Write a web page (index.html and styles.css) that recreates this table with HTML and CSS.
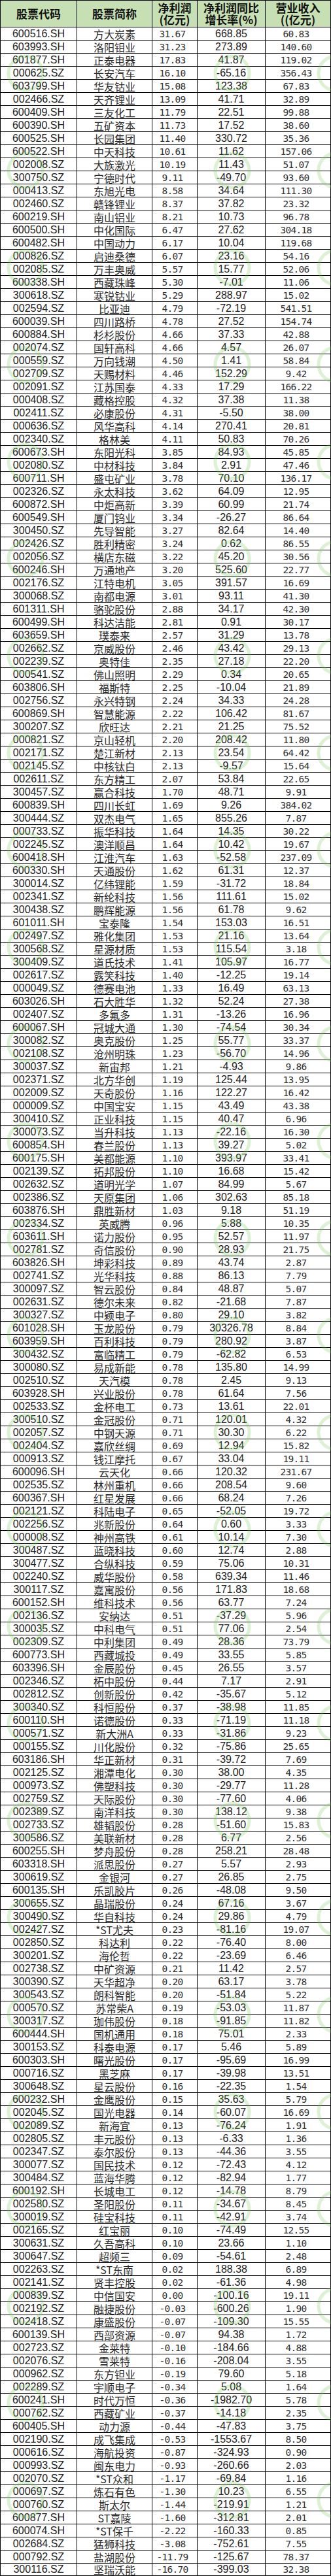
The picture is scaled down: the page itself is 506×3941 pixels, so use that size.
FILE: index.html
```html
<!DOCTYPE html>
<html lang="zh-CN">
<head>
<meta charset="utf-8">
<title>股票净利润表</title>
<link rel="stylesheet" href="styles.css">
</head>
<body>
<div class="sheet">
<div class="watermark" aria-hidden="true"></div>
<div class="row head"><span class="c">股票代码</span><span class="c">股票简称</span><span class="c two">净利润<br>(亿元)</span><span class="c two">净利润同比<br>增长率(%)</span><span class="c two">营业收入<br>((亿元)</span></div>
<div class="row"><span class="c code">600516.SH</span><span class="c name">方大炭素</span><span class="c np">31.67</span><span class="c gr">668.85</span><span class="c rev">60.83</span></div>
<div class="row"><span class="c code">603993.SH</span><span class="c name">洛阳钼业</span><span class="c np">31.23</span><span class="c gr">273.89</span><span class="c rev">140.60</span></div>
<div class="row"><span class="c code">601877.SH</span><span class="c name">正泰电器</span><span class="c np">17.83</span><span class="c gr">41.87</span><span class="c rev">119.02</span></div>
<div class="row"><span class="c code">000625.SZ</span><span class="c name">长安汽车</span><span class="c np">16.10</span><span class="c gr">-65.16</span><span class="c rev">356.43</span></div>
<div class="row"><span class="c code">603799.SH</span><span class="c name">华友钴业</span><span class="c np">15.08</span><span class="c gr">123.38</span><span class="c rev">67.83</span></div>
<div class="row"><span class="c code">002466.SZ</span><span class="c name">天齐锂业</span><span class="c np">13.09</span><span class="c gr">41.71</span><span class="c rev">32.89</span></div>
<div class="row"><span class="c code">600409.SH</span><span class="c name">三友化工</span><span class="c np">11.79</span><span class="c gr">22.51</span><span class="c rev">99.88</span></div>
<div class="row"><span class="c code">600390.SH</span><span class="c name">五矿资本</span><span class="c np">11.73</span><span class="c gr">17.52</span><span class="c rev">38.60</span></div>
<div class="row"><span class="c code">600525.SH</span><span class="c name">长园集团</span><span class="c np">11.40</span><span class="c gr">330.72</span><span class="c rev">35.36</span></div>
<div class="row"><span class="c code">600522.SH</span><span class="c name">中天科技</span><span class="c np">10.61</span><span class="c gr">11.62</span><span class="c rev">157.06</span></div>
<div class="row"><span class="c code">002008.SZ</span><span class="c name">大族激光</span><span class="c np">10.19</span><span class="c gr">11.43</span><span class="c rev">51.07</span></div>
<div class="row"><span class="c code">300750.SZ</span><span class="c name">宁德时代</span><span class="c np">9.11</span><span class="c gr">-49.70</span><span class="c rev">93.60</span></div>
<div class="row"><span class="c code">000413.SZ</span><span class="c name">东旭光电</span><span class="c np">8.58</span><span class="c gr">34.64</span><span class="c rev">111.30</span></div>
<div class="row"><span class="c code">002460.SZ</span><span class="c name">赣锋锂业</span><span class="c np">8.37</span><span class="c gr">37.82</span><span class="c rev">23.32</span></div>
<div class="row"><span class="c code">600219.SH</span><span class="c name">南山铝业</span><span class="c np">8.21</span><span class="c gr">10.73</span><span class="c rev">96.78</span></div>
<div class="row"><span class="c code">600500.SH</span><span class="c name">中化国际</span><span class="c np">6.47</span><span class="c gr">27.62</span><span class="c rev">304.18</span></div>
<div class="row"><span class="c code">600482.SH</span><span class="c name">中国动力</span><span class="c np">6.17</span><span class="c gr">10.04</span><span class="c rev">119.68</span></div>
<div class="row"><span class="c code">000826.SZ</span><span class="c name">启迪桑德</span><span class="c np">6.07</span><span class="c gr">23.16</span><span class="c rev">54.16</span></div>
<div class="row"><span class="c code">002085.SZ</span><span class="c name">万丰奥威</span><span class="c np">5.57</span><span class="c gr">15.77</span><span class="c rev">52.06</span></div>
<div class="row"><span class="c code">600338.SH</span><span class="c name">西藏珠峰</span><span class="c np">5.30</span><span class="c gr">-7.01</span><span class="c rev">11.06</span></div>
<div class="row"><span class="c code">300618.SZ</span><span class="c name">寒锐钴业</span><span class="c np">5.29</span><span class="c gr">288.97</span><span class="c rev">15.02</span></div>
<div class="row"><span class="c code">002594.SZ</span><span class="c name">比亚迪</span><span class="c np">4.79</span><span class="c gr">-72.19</span><span class="c rev">541.51</span></div>
<div class="row"><span class="c code">600039.SH</span><span class="c name">四川路桥</span><span class="c np">4.78</span><span class="c gr">27.52</span><span class="c rev">154.74</span></div>
<div class="row"><span class="c code">600884.SH</span><span class="c name">杉杉股份</span><span class="c np">4.66</span><span class="c gr">37.33</span><span class="c rev">42.88</span></div>
<div class="row"><span class="c code">002074.SZ</span><span class="c name">国轩高科</span><span class="c np">4.66</span><span class="c gr">4.57</span><span class="c rev">26.07</span></div>
<div class="row"><span class="c code">000559.SZ</span><span class="c name">万向钱潮</span><span class="c np">4.50</span><span class="c gr">1.41</span><span class="c rev">58.84</span></div>
<div class="row"><span class="c code">002709.SZ</span><span class="c name">天赐材料</span><span class="c np">4.46</span><span class="c gr">152.29</span><span class="c rev">9.42</span></div>
<div class="row"><span class="c code">002091.SZ</span><span class="c name">江苏国泰</span><span class="c np">4.33</span><span class="c gr">17.29</span><span class="c rev">166.22</span></div>
<div class="row"><span class="c code">000408.SZ</span><span class="c name">藏格控股</span><span class="c np">4.32</span><span class="c gr">37.38</span><span class="c rev">11.38</span></div>
<div class="row"><span class="c code">002411.SZ</span><span class="c name">必康股份</span><span class="c np">4.31</span><span class="c gr">-5.50</span><span class="c rev">38.00</span></div>
<div class="row"><span class="c code">000636.SZ</span><span class="c name">风华高科</span><span class="c np">4.14</span><span class="c gr">270.41</span><span class="c rev">20.81</span></div>
<div class="row"><span class="c code">002340.SZ</span><span class="c name">格林美</span><span class="c np">4.11</span><span class="c gr">50.83</span><span class="c rev">70.26</span></div>
<div class="row"><span class="c code">600673.SH</span><span class="c name">东阳光科</span><span class="c np">3.85</span><span class="c gr">84.93</span><span class="c rev">45.85</span></div>
<div class="row"><span class="c code">002080.SZ</span><span class="c name">中材科技</span><span class="c np">3.84</span><span class="c gr">2.91</span><span class="c rev">47.46</span></div>
<div class="row"><span class="c code">600711.SH</span><span class="c name">盛屯矿业</span><span class="c np">3.78</span><span class="c gr">70.10</span><span class="c rev">136.17</span></div>
<div class="row"><span class="c code">002326.SZ</span><span class="c name">永太科技</span><span class="c np">3.62</span><span class="c gr">64.09</span><span class="c rev">12.95</span></div>
<div class="row"><span class="c code">600872.SH</span><span class="c name">中炬高新</span><span class="c np">3.39</span><span class="c gr">60.99</span><span class="c rev">21.74</span></div>
<div class="row"><span class="c code">600549.SH</span><span class="c name">厦门钨业</span><span class="c np">3.34</span><span class="c gr">-26.27</span><span class="c rev">86.64</span></div>
<div class="row"><span class="c code">300450.SZ</span><span class="c name">先导智能</span><span class="c np">3.27</span><span class="c gr">82.64</span><span class="c rev">14.40</span></div>
<div class="row"><span class="c code">002426.SZ</span><span class="c name">胜利精密</span><span class="c np">3.24</span><span class="c gr">0.62</span><span class="c rev">86.55</span></div>
<div class="row"><span class="c code">002056.SZ</span><span class="c name">横店东磁</span><span class="c np">3.22</span><span class="c gr">45.20</span><span class="c rev">30.56</span></div>
<div class="row"><span class="c code">600246.SH</span><span class="c name">万通地产</span><span class="c np">3.20</span><span class="c gr">525.60</span><span class="c rev">22.77</span></div>
<div class="row"><span class="c code">002176.SZ</span><span class="c name">江特电机</span><span class="c np">3.05</span><span class="c gr">391.57</span><span class="c rev">16.69</span></div>
<div class="row"><span class="c code">300068.SZ</span><span class="c name">南都电源</span><span class="c np">3.01</span><span class="c gr">93.11</span><span class="c rev">41.30</span></div>
<div class="row"><span class="c code">601311.SH</span><span class="c name">骆驼股份</span><span class="c np">2.88</span><span class="c gr">34.17</span><span class="c rev">42.30</span></div>
<div class="row"><span class="c code">600499.SH</span><span class="c name">科达洁能</span><span class="c np">2.81</span><span class="c gr">0.91</span><span class="c rev">30.17</span></div>
<div class="row"><span class="c code">603659.SH</span><span class="c name">璞泰来</span><span class="c np">2.57</span><span class="c gr">31.29</span><span class="c rev">13.78</span></div>
<div class="row"><span class="c code">002662.SZ</span><span class="c name">京威股份</span><span class="c np">2.46</span><span class="c gr">43.42</span><span class="c rev">29.13</span></div>
<div class="row"><span class="c code">002239.SZ</span><span class="c name">奥特佳</span><span class="c np">2.35</span><span class="c gr">27.18</span><span class="c rev">22.20</span></div>
<div class="row"><span class="c code">000541.SZ</span><span class="c name">佛山照明</span><span class="c np">2.29</span><span class="c gr">0.34</span><span class="c rev">20.65</span></div>
<div class="row"><span class="c code">603806.SH</span><span class="c name">福斯特</span><span class="c np">2.25</span><span class="c gr">-10.04</span><span class="c rev">21.89</span></div>
<div class="row"><span class="c code">002756.SZ</span><span class="c name">永兴特钢</span><span class="c np">2.24</span><span class="c gr">34.33</span><span class="c rev">24.28</span></div>
<div class="row"><span class="c code">600869.SH</span><span class="c name">智慧能源</span><span class="c np">2.22</span><span class="c gr">106.42</span><span class="c rev">81.67</span></div>
<div class="row"><span class="c code">300207.SZ</span><span class="c name">欣旺达</span><span class="c np">2.21</span><span class="c gr">21.25</span><span class="c rev">75.52</span></div>
<div class="row"><span class="c code">000821.SZ</span><span class="c name">京山轻机</span><span class="c np">2.20</span><span class="c gr">208.42</span><span class="c rev">11.80</span></div>
<div class="row"><span class="c code">002171.SZ</span><span class="c name">楚江新材</span><span class="c np">2.13</span><span class="c gr">23.54</span><span class="c rev">64.42</span></div>
<div class="row"><span class="c code">002145.SZ</span><span class="c name">中核钛白</span><span class="c np">2.13</span><span class="c gr">-9.57</span><span class="c rev">15.64</span></div>
<div class="row"><span class="c code">002611.SZ</span><span class="c name">东方精工</span><span class="c np">2.07</span><span class="c gr">53.84</span><span class="c rev">22.65</span></div>
<div class="row"><span class="c code">300457.SZ</span><span class="c name">赢合科技</span><span class="c np">1.70</span><span class="c gr">48.71</span><span class="c rev">9.91</span></div>
<div class="row"><span class="c code">600839.SH</span><span class="c name">四川长虹</span><span class="c np">1.69</span><span class="c gr">9.26</span><span class="c rev">384.02</span></div>
<div class="row"><span class="c code">300444.SZ</span><span class="c name">双杰电气</span><span class="c np">1.65</span><span class="c gr">855.26</span><span class="c rev">7.87</span></div>
<div class="row"><span class="c code">000733.SZ</span><span class="c name">振华科技</span><span class="c np">1.64</span><span class="c gr">14.35</span><span class="c rev">30.22</span></div>
<div class="row"><span class="c code">002245.SZ</span><span class="c name">澳洋顺昌</span><span class="c np">1.64</span><span class="c gr">10.42</span><span class="c rev">19.67</span></div>
<div class="row"><span class="c code">600418.SH</span><span class="c name">江淮汽车</span><span class="c np">1.63</span><span class="c gr">-52.58</span><span class="c rev">237.09</span></div>
<div class="row"><span class="c code">600330.SH</span><span class="c name">天通股份</span><span class="c np">1.62</span><span class="c gr">61.31</span><span class="c rev">12.37</span></div>
<div class="row"><span class="c code">300014.SZ</span><span class="c name">亿纬锂能</span><span class="c np">1.59</span><span class="c gr">-31.72</span><span class="c rev">18.84</span></div>
<div class="row"><span class="c code">002341.SZ</span><span class="c name">新纶科技</span><span class="c np">1.56</span><span class="c gr">111.61</span><span class="c rev">15.02</span></div>
<div class="row"><span class="c code">300438.SZ</span><span class="c name">鹏辉能源</span><span class="c np">1.56</span><span class="c gr">61.78</span><span class="c rev">9.62</span></div>
<div class="row"><span class="c code">601011.SH</span><span class="c name">宝泰隆</span><span class="c np">1.54</span><span class="c gr">153.03</span><span class="c rev">16.51</span></div>
<div class="row"><span class="c code">002497.SZ</span><span class="c name">雅化集团</span><span class="c np">1.53</span><span class="c gr">21.16</span><span class="c rev">13.64</span></div>
<div class="row"><span class="c code">300568.SZ</span><span class="c name">星源材质</span><span class="c np">1.53</span><span class="c gr">115.54</span><span class="c rev">3.18</span></div>
<div class="row"><span class="c code">300409.SZ</span><span class="c name">道氏技术</span><span class="c np">1.41</span><span class="c gr">105.97</span><span class="c rev">16.77</span></div>
<div class="row"><span class="c code">002617.SZ</span><span class="c name">露笑科技</span><span class="c np">1.40</span><span class="c gr">-12.25</span><span class="c rev">19.14</span></div>
<div class="row"><span class="c code">000049.SZ</span><span class="c name">德赛电池</span><span class="c np">1.33</span><span class="c gr">16.49</span><span class="c rev">63.13</span></div>
<div class="row"><span class="c code">603026.SH</span><span class="c name">石大胜华</span><span class="c np">1.32</span><span class="c gr">52.24</span><span class="c rev">27.38</span></div>
<div class="row"><span class="c code">002407.SZ</span><span class="c name">多氟多</span><span class="c np">1.31</span><span class="c gr">-13.26</span><span class="c rev">16.96</span></div>
<div class="row"><span class="c code">600067.SH</span><span class="c name">冠城大通</span><span class="c np">1.30</span><span class="c gr">-74.54</span><span class="c rev">30.34</span></div>
<div class="row"><span class="c code">300082.SZ</span><span class="c name">奥克股份</span><span class="c np">1.25</span><span class="c gr">55.77</span><span class="c rev">33.37</span></div>
<div class="row"><span class="c code">002108.SZ</span><span class="c name">沧州明珠</span><span class="c np">1.23</span><span class="c gr">-56.70</span><span class="c rev">14.96</span></div>
<div class="row"><span class="c code">300037.SZ</span><span class="c name">新宙邦</span><span class="c np">1.21</span><span class="c gr">-4.93</span><span class="c rev">9.86</span></div>
<div class="row"><span class="c code">002371.SZ</span><span class="c name">北方华创</span><span class="c np">1.19</span><span class="c gr">125.44</span><span class="c rev">13.95</span></div>
<div class="row"><span class="c code">002009.SZ</span><span class="c name">天奇股份</span><span class="c np">1.16</span><span class="c gr">122.27</span><span class="c rev">16.42</span></div>
<div class="row"><span class="c code">000009.SZ</span><span class="c name">中国宝安</span><span class="c np">1.15</span><span class="c gr">43.49</span><span class="c rev">43.38</span></div>
<div class="row"><span class="c code">300410.SZ</span><span class="c name">正业科技</span><span class="c np">1.15</span><span class="c gr">40.47</span><span class="c rev">6.96</span></div>
<div class="row"><span class="c code">300073.SZ</span><span class="c name">当升科技</span><span class="c np">1.13</span><span class="c gr">-22.16</span><span class="c rev">16.30</span></div>
<div class="row"><span class="c code">600854.SH</span><span class="c name">春兰股份</span><span class="c np">1.13</span><span class="c gr">39.27</span><span class="c rev">5.02</span></div>
<div class="row"><span class="c code">600175.SH</span><span class="c name">美都能源</span><span class="c np">1.10</span><span class="c gr">393.97</span><span class="c rev">33.41</span></div>
<div class="row"><span class="c code">002139.SZ</span><span class="c name">拓邦股份</span><span class="c np">1.10</span><span class="c gr">16.68</span><span class="c rev">15.42</span></div>
<div class="row"><span class="c code">002632.SZ</span><span class="c name">道明光学</span><span class="c np">1.07</span><span class="c gr">84.99</span><span class="c rev">5.67</span></div>
<div class="row"><span class="c code">002386.SZ</span><span class="c name">天原集团</span><span class="c np">1.06</span><span class="c gr">302.63</span><span class="c rev">85.18</span></div>
<div class="row"><span class="c code">603876.SH</span><span class="c name">鼎胜新材</span><span class="c np">1.03</span><span class="c gr">9.18</span><span class="c rev">51.19</span></div>
<div class="row"><span class="c code">002334.SZ</span><span class="c name">英威腾</span><span class="c np">0.96</span><span class="c gr">5.88</span><span class="c rev">10.35</span></div>
<div class="row"><span class="c code">603611.SH</span><span class="c name">诺力股份</span><span class="c np">0.95</span><span class="c gr">52.57</span><span class="c rev">11.97</span></div>
<div class="row"><span class="c code">002781.SZ</span><span class="c name">奇信股份</span><span class="c np">0.90</span><span class="c gr">28.93</span><span class="c rev">21.75</span></div>
<div class="row"><span class="c code">603826.SH</span><span class="c name">坤彩科技</span><span class="c np">0.89</span><span class="c gr">43.74</span><span class="c rev">2.87</span></div>
<div class="row"><span class="c code">002741.SZ</span><span class="c name">光华科技</span><span class="c np">0.88</span><span class="c gr">86.13</span><span class="c rev">7.79</span></div>
<div class="row"><span class="c code">300097.SZ</span><span class="c name">智云股份</span><span class="c np">0.84</span><span class="c gr">48.87</span><span class="c rev">5.07</span></div>
<div class="row"><span class="c code">002631.SZ</span><span class="c name">德尔未来</span><span class="c np">0.82</span><span class="c gr">-21.68</span><span class="c rev">7.87</span></div>
<div class="row"><span class="c code">300327.SZ</span><span class="c name">中颖电子</span><span class="c np">0.80</span><span class="c gr">29.10</span><span class="c rev">3.82</span></div>
<div class="row"><span class="c code">601028.SH</span><span class="c name">玉龙股份</span><span class="c np">0.79</span><span class="c gr">30326.78</span><span class="c rev">8.84</span></div>
<div class="row"><span class="c code">603959.SH</span><span class="c name">百利科技</span><span class="c np">0.79</span><span class="c gr">280.92</span><span class="c rev">3.87</span></div>
<div class="row"><span class="c code">300432.SZ</span><span class="c name">富临精工</span><span class="c np">0.79</span><span class="c gr">-62.82</span><span class="c rev">6.53</span></div>
<div class="row"><span class="c code">300080.SZ</span><span class="c name">易成新能</span><span class="c np">0.78</span><span class="c gr">135.80</span><span class="c rev">14.99</span></div>
<div class="row"><span class="c code">002510.SZ</span><span class="c name">天汽模</span><span class="c np">0.78</span><span class="c gr">2.45</span><span class="c rev">9.13</span></div>
<div class="row"><span class="c code">603928.SH</span><span class="c name">兴业股份</span><span class="c np">0.78</span><span class="c gr">61.64</span><span class="c rev">7.56</span></div>
<div class="row"><span class="c code">002533.SZ</span><span class="c name">金杯电工</span><span class="c np">0.73</span><span class="c gr">13.61</span><span class="c rev">22.01</span></div>
<div class="row"><span class="c code">300510.SZ</span><span class="c name">金冠股份</span><span class="c np">0.71</span><span class="c gr">120.01</span><span class="c rev">4.32</span></div>
<div class="row"><span class="c code">002057.SZ</span><span class="c name">中钢天源</span><span class="c np">0.71</span><span class="c gr">30.30</span><span class="c rev">6.22</span></div>
<div class="row"><span class="c code">002404.SZ</span><span class="c name">嘉欣丝绸</span><span class="c np">0.69</span><span class="c gr">12.94</span><span class="c rev">15.82</span></div>
<div class="row"><span class="c code">000913.SZ</span><span class="c name">钱江摩托</span><span class="c np">0.67</span><span class="c gr">33.04</span><span class="c rev">19.11</span></div>
<div class="row"><span class="c code">600096.SH</span><span class="c name">云天化</span><span class="c np">0.66</span><span class="c gr">120.32</span><span class="c rev">231.67</span></div>
<div class="row"><span class="c code">002535.SZ</span><span class="c name">林州重机</span><span class="c np">0.66</span><span class="c gr">208.54</span><span class="c rev">9.60</span></div>
<div class="row"><span class="c code">600367.SH</span><span class="c name">红星发展</span><span class="c np">0.66</span><span class="c gr">68.24</span><span class="c rev">7.26</span></div>
<div class="row"><span class="c code">002121.SZ</span><span class="c name">科陆电子</span><span class="c np">0.65</span><span class="c gr">-52.05</span><span class="c rev">19.72</span></div>
<div class="row"><span class="c code">002256.SZ</span><span class="c name">兆新股份</span><span class="c np">0.64</span><span class="c gr">0.60</span><span class="c rev">3.33</span></div>
<div class="row"><span class="c code">000008.SZ</span><span class="c name">神州高铁</span><span class="c np">0.61</span><span class="c gr">10.14</span><span class="c rev">7.30</span></div>
<div class="row"><span class="c code">300487.SZ</span><span class="c name">蓝晓科技</span><span class="c np">0.60</span><span class="c gr">12.74</span><span class="c rev">2.88</span></div>
<div class="row"><span class="c code">300477.SZ</span><span class="c name">合纵科技</span><span class="c np">0.59</span><span class="c gr">75.06</span><span class="c rev">10.31</span></div>
<div class="row"><span class="c code">002240.SZ</span><span class="c name">威华股份</span><span class="c np">0.58</span><span class="c gr">639.34</span><span class="c rev">11.46</span></div>
<div class="row"><span class="c code">300117.SZ</span><span class="c name">嘉寓股份</span><span class="c np">0.56</span><span class="c gr">171.83</span><span class="c rev">18.68</span></div>
<div class="row"><span class="c code">600152.SH</span><span class="c name">维科技术</span><span class="c np">0.56</span><span class="c gr">63.77</span><span class="c rev">7.24</span></div>
<div class="row"><span class="c code">002136.SZ</span><span class="c name">安纳达</span><span class="c np">0.51</span><span class="c gr">-37.29</span><span class="c rev">5.96</span></div>
<div class="row"><span class="c code">300035.SZ</span><span class="c name">中科电气</span><span class="c np">0.51</span><span class="c gr">77.06</span><span class="c rev">2.54</span></div>
<div class="row"><span class="c code">002309.SZ</span><span class="c name">中利集团</span><span class="c np">0.49</span><span class="c gr">28.36</span><span class="c rev">73.79</span></div>
<div class="row"><span class="c code">600773.SH</span><span class="c name">西藏城投</span><span class="c np">0.49</span><span class="c gr">33.55</span><span class="c rev">5.85</span></div>
<div class="row"><span class="c code">603396.SH</span><span class="c name">金辰股份</span><span class="c np">0.45</span><span class="c gr">26.55</span><span class="c rev">3.57</span></div>
<div class="row"><span class="c code">002346.SZ</span><span class="c name">柘中股份</span><span class="c np">0.44</span><span class="c gr">7.17</span><span class="c rev">2.91</span></div>
<div class="row"><span class="c code">002812.SZ</span><span class="c name">创新股份</span><span class="c np">0.42</span><span class="c gr">-35.67</span><span class="c rev">5.12</span></div>
<div class="row"><span class="c code">300340.SZ</span><span class="c name">科恒股份</span><span class="c np">0.37</span><span class="c gr">-38.98</span><span class="c rev">11.85</span></div>
<div class="row"><span class="c code">600110.SH</span><span class="c name">诺德股份</span><span class="c np">0.33</span><span class="c gr">-71.19</span><span class="c rev">11.18</span></div>
<div class="row"><span class="c code">000571.SZ</span><span class="c name">新大洲A</span><span class="c np">0.33</span><span class="c gr">-31.86</span><span class="c rev">9.23</span></div>
<div class="row"><span class="c code">000155.SZ</span><span class="c name">川化股份</span><span class="c np">0.32</span><span class="c gr">-75.86</span><span class="c rev">25.65</span></div>
<div class="row"><span class="c code">603186.SH</span><span class="c name">华正新材</span><span class="c np">0.31</span><span class="c gr">-39.72</span><span class="c rev">7.69</span></div>
<div class="row"><span class="c code">002125.SZ</span><span class="c name">湘潭电化</span><span class="c np">0.30</span><span class="c gr">38.00</span><span class="c rev">4.35</span></div>
<div class="row"><span class="c code">000973.SZ</span><span class="c name">佛塑科技</span><span class="c np">0.30</span><span class="c gr">-29.77</span><span class="c rev">11.28</span></div>
<div class="row"><span class="c code">002759.SZ</span><span class="c name">天际股份</span><span class="c np">0.30</span><span class="c gr">-77.60</span><span class="c rev">4.06</span></div>
<div class="row"><span class="c code">002389.SZ</span><span class="c name">南洋科技</span><span class="c np">0.30</span><span class="c gr">138.12</span><span class="c rev">9.38</span></div>
<div class="row"><span class="c code">002733.SZ</span><span class="c name">雄韬股份</span><span class="c np">0.28</span><span class="c gr">-51.60</span><span class="c rev">15.83</span></div>
<div class="row"><span class="c code">300586.SZ</span><span class="c name">美联新材</span><span class="c np">0.28</span><span class="c gr">6.77</span><span class="c rev">2.56</span></div>
<div class="row"><span class="c code">600255.SH</span><span class="c name">梦舟股份</span><span class="c np">0.28</span><span class="c gr">258.21</span><span class="c rev">28.48</span></div>
<div class="row"><span class="c code">603318.SH</span><span class="c name">派思股份</span><span class="c np">0.27</span><span class="c gr">5.57</span><span class="c rev">2.93</span></div>
<div class="row"><span class="c code">300619.SZ</span><span class="c name">金银河</span><span class="c np">0.27</span><span class="c gr">26.85</span><span class="c rev">2.75</span></div>
<div class="row"><span class="c code">600135.SH</span><span class="c name">乐凯胶片</span><span class="c np">0.26</span><span class="c gr">-48.08</span><span class="c rev">9.50</span></div>
<div class="row"><span class="c code">300655.SZ</span><span class="c name">晶瑞股份</span><span class="c np">0.24</span><span class="c gr">67.16</span><span class="c rev">3.67</span></div>
<div class="row"><span class="c code">300490.SZ</span><span class="c name">华自科技</span><span class="c np">0.24</span><span class="c gr">29.86</span><span class="c rev">4.79</span></div>
<div class="row"><span class="c code">002427.SZ</span><span class="c name">*ST尤夫</span><span class="c np">0.23</span><span class="c gr">-81.16</span><span class="c rev">19.07</span></div>
<div class="row"><span class="c code">002850.SZ</span><span class="c name">科达利</span><span class="c np">0.22</span><span class="c gr">-76.40</span><span class="c rev">8.00</span></div>
<div class="row"><span class="c code">300201.SZ</span><span class="c name">海伦哲</span><span class="c np">0.22</span><span class="c gr">-23.69</span><span class="c rev">6.46</span></div>
<div class="row"><span class="c code">002738.SZ</span><span class="c name">中矿资源</span><span class="c np">0.21</span><span class="c gr">11.42</span><span class="c rev">2.57</span></div>
<div class="row"><span class="c code">300390.SZ</span><span class="c name">天华超净</span><span class="c np">0.20</span><span class="c gr">63.17</span><span class="c rev">3.78</span></div>
<div class="row"><span class="c code">300543.SZ</span><span class="c name">朗科智能</span><span class="c np">0.20</span><span class="c gr">-51.84</span><span class="c rev">5.22</span></div>
<div class="row"><span class="c code">000570.SZ</span><span class="c name">苏常柴A</span><span class="c np">0.19</span><span class="c gr">-53.03</span><span class="c rev">11.87</span></div>
<div class="row"><span class="c code">300317.SZ</span><span class="c name">珈伟股份</span><span class="c np">0.18</span><span class="c gr">-91.85</span><span class="c rev">11.82</span></div>
<div class="row"><span class="c code">600444.SH</span><span class="c name">国机通用</span><span class="c np">0.18</span><span class="c gr">75.01</span><span class="c rev">2.33</span></div>
<div class="row"><span class="c code">300153.SZ</span><span class="c name">科泰电源</span><span class="c np">0.17</span><span class="c gr">5.46</span><span class="c rev">5.89</span></div>
<div class="row"><span class="c code">600303.SH</span><span class="c name">曙光股份</span><span class="c np">0.17</span><span class="c gr">-95.69</span><span class="c rev">16.99</span></div>
<div class="row"><span class="c code">000716.SZ</span><span class="c name">黑芝麻</span><span class="c np">0.17</span><span class="c gr">-39.98</span><span class="c rev">13.51</span></div>
<div class="row"><span class="c code">300648.SZ</span><span class="c name">星云股份</span><span class="c np">0.16</span><span class="c gr">-22.35</span><span class="c rev">1.54</span></div>
<div class="row"><span class="c code">600232.SH</span><span class="c name">金鹰股份</span><span class="c np">0.15</span><span class="c gr">35.63</span><span class="c rev">5.79</span></div>
<div class="row"><span class="c code">002045.SZ</span><span class="c name">国光电器</span><span class="c np">0.14</span><span class="c gr">-60.07</span><span class="c rev">16.69</span></div>
<div class="row"><span class="c code">002089.SZ</span><span class="c name">新海宜</span><span class="c np">0.13</span><span class="c gr">-76.24</span><span class="c rev">1.91</span></div>
<div class="row"><span class="c code">002805.SZ</span><span class="c name">丰元股份</span><span class="c np">0.13</span><span class="c gr">-6.33</span><span class="c rev">1.36</span></div>
<div class="row"><span class="c code">002347.SZ</span><span class="c name">泰尔股份</span><span class="c np">0.13</span><span class="c gr">-44.36</span><span class="c rev">3.55</span></div>
<div class="row"><span class="c code">300077.SZ</span><span class="c name">国民技术</span><span class="c np">0.12</span><span class="c gr">-72.43</span><span class="c rev">4.12</span></div>
<div class="row"><span class="c code">300484.SZ</span><span class="c name">蓝海华腾</span><span class="c np">0.12</span><span class="c gr">-82.94</span><span class="c rev">1.77</span></div>
<div class="row"><span class="c code">600192.SH</span><span class="c name">长城电工</span><span class="c np">0.12</span><span class="c gr">-14.78</span><span class="c rev">8.79</span></div>
<div class="row"><span class="c code">002580.SZ</span><span class="c name">圣阳股份</span><span class="c np">0.11</span><span class="c gr">-34.67</span><span class="c rev">8.45</span></div>
<div class="row"><span class="c code">300019.SZ</span><span class="c name">硅宝科技</span><span class="c np">0.11</span><span class="c gr">-42.91</span><span class="c rev">3.74</span></div>
<div class="row"><span class="c code">002165.SZ</span><span class="c name">红宝丽</span><span class="c np">0.10</span><span class="c gr">-74.49</span><span class="c rev">12.55</span></div>
<div class="row"><span class="c code">300631.SZ</span><span class="c name">久吾高科</span><span class="c np">0.10</span><span class="c gr">23.66</span><span class="c rev">1.10</span></div>
<div class="row"><span class="c code">300647.SZ</span><span class="c name">超频三</span><span class="c np">0.09</span><span class="c gr">-54.61</span><span class="c rev">2.48</span></div>
<div class="row"><span class="c code">002263.SZ</span><span class="c name">*ST东南</span><span class="c np">0.02</span><span class="c gr">188.38</span><span class="c rev">6.89</span></div>
<div class="row"><span class="c code">002141.SZ</span><span class="c name">贤丰控股</span><span class="c np">0.02</span><span class="c gr">-61.36</span><span class="c rev">4.98</span></div>
<div class="row"><span class="c code">000839.SZ</span><span class="c name">中信国安</span><span class="c np">0.00</span><span class="c gr">-100.16</span><span class="c rev">19.11</span></div>
<div class="row"><span class="c code">002192.SZ</span><span class="c name">融捷股份</span><span class="c np">-0.03</span><span class="c gr">-600.26</span><span class="c rev">1.90</span></div>
<div class="row"><span class="c code">002418.SZ</span><span class="c name">康盛股份</span><span class="c np">-0.07</span><span class="c gr">-109.30</span><span class="c rev">15.55</span></div>
<div class="row"><span class="c code">600139.SH</span><span class="c name">西部资源</span><span class="c np">-0.07</span><span class="c gr">94.38</span><span class="c rev">1.72</span></div>
<div class="row"><span class="c code">002723.SZ</span><span class="c name">金莱特</span><span class="c np">-0.10</span><span class="c gr">-184.66</span><span class="c rev">4.88</span></div>
<div class="row"><span class="c code">002076.SZ</span><span class="c name">雪莱特</span><span class="c np">-0.16</span><span class="c gr">-208.04</span><span class="c rev">3.55</span></div>
<div class="row"><span class="c code">000962.SZ</span><span class="c name">东方钽业</span><span class="c np">-0.19</span><span class="c gr">79.60</span><span class="c rev">5.18</span></div>
<div class="row"><span class="c code">002289.SZ</span><span class="c name">宇顺电子</span><span class="c np">-0.34</span><span class="c gr">5.08</span><span class="c rev">1.64</span></div>
<div class="row"><span class="c code">600241.SH</span><span class="c name">时代万恒</span><span class="c np">-0.36</span><span class="c gr">-1982.70</span><span class="c rev">5.78</span></div>
<div class="row"><span class="c code">000762.SZ</span><span class="c name">西藏矿业</span><span class="c np">-0.37</span><span class="c gr">-14.18</span><span class="c rev">2.35</span></div>
<div class="row"><span class="c code">600405.SH</span><span class="c name">动力源</span><span class="c np">-0.44</span><span class="c gr">-47.83</span><span class="c rev">3.75</span></div>
<div class="row"><span class="c code">002190.SZ</span><span class="c name">成飞集成</span><span class="c np">-0.53</span><span class="c gr">-1553.67</span><span class="c rev">8.50</span></div>
<div class="row"><span class="c code">000616.SZ</span><span class="c name">海航投资</span><span class="c np">-0.87</span><span class="c gr">-324.93</span><span class="c rev">0.90</span></div>
<div class="row"><span class="c code">000993.SZ</span><span class="c name">闽东电力</span><span class="c np">-0.93</span><span class="c gr">-260.66</span><span class="c rev">2.03</span></div>
<div class="row"><span class="c code">002070.SZ</span><span class="c name">*ST众和</span><span class="c np">-1.17</span><span class="c gr">-69.84</span><span class="c rev">1.16</span></div>
<div class="row"><span class="c code">000697.SZ</span><span class="c name">炼石有色</span><span class="c np">-1.30</span><span class="c gr">10.23</span><span class="c rev">6.55</span></div>
<div class="row"><span class="c code">000760.SZ</span><span class="c name">斯太尔</span><span class="c np">-1.44</span><span class="c gr">-219.91</span><span class="c rev">1.21</span></div>
<div class="row"><span class="c code">600877.SH</span><span class="c name">ST嘉陵</span><span class="c np">-1.60</span><span class="c gr">-312.81</span><span class="c rev">2.01</span></div>
<div class="row"><span class="c code">600074.SH</span><span class="c name">*ST保千</span><span class="c np">-2.22</span><span class="c gr">-160.33</span><span class="c rev">0.85</span></div>
<div class="row"><span class="c code">002684.SZ</span><span class="c name">猛狮科技</span><span class="c np">-3.08</span><span class="c gr">-752.61</span><span class="c rev">7.55</span></div>
<div class="row"><span class="c code">000792.SZ</span><span class="c name">盐湖股份</span><span class="c np">-11.79</span><span class="c gr">-125.67</span><span class="c rev">78.37</span></div>
<div class="row"><span class="c code">300116.SZ</span><span class="c name">坚瑞沃能</span><span class="c np">-16.70</span><span class="c gr">-399.03</span><span class="c rev">32.38</span></div>
</div>
</body>
</html>
```
FILE: styles.css
```css
html, body {
  margin: 0;
  padding: 0;
  background: #ffffff;
  overflow: hidden;
}

.sheet {
  position: relative;
  width: 506px;
  box-sizing: border-box;
  border-left: 1px solid #000;
  border-top: 1px solid #000;
  color: #222;
}

.row {
  display: grid;
  grid-template-columns: 117px 115px 69px 104px 100px;
  height: 20px;
}

.row:last-child {
  height: 19px;
}

.c {
  box-sizing: border-box;
  border-right: 1px solid #000;
  border-bottom: 1px solid #000;
  display: flex;
  align-items: center;
  justify-content: center;
  white-space: nowrap;
  line-height: 16px;
}

.head {
  height: 41px;
  background: #c6e0b4;
}

.head .c {
  font-family: "Noto Sans CJK SC", sans-serif;
  font-weight: 700;
  font-size: 17px;
  line-height: 18px;
  color: #111;
  text-align: center;
}

.code, .gr {
  font-family: "Liberation Sans", Arial, sans-serif;
  font-size: 16px;
}

.name {
  font-family: "Noto Sans CJK SC", sans-serif;
  font-size: 16px;
  color: #2a2a2a;
}

.np, .rev {
  font-family: "DejaVu Sans Mono", monospace;
  font-size: 14.5px;
  letter-spacing: -0.7px;
  color: #333;
}

.np {
  padding-right: 7px;
}

.rev {
  padding-right: 6px;
}

.watermark {
  position: absolute;
  left: 0;
  top: 0;
  right: 0;
  bottom: 0;
  z-index: 1;
  pointer-events: none;
  background-image:
    radial-gradient(circle, rgba(0,0,0,0) 23px, rgba(120,200,90,0.26) 24px, rgba(120,200,90,0.26) 28px, rgba(0,0,0,0) 29px),
    radial-gradient(circle, rgba(0,0,0,0) 23px, rgba(120,200,90,0.26) 24px, rgba(120,200,90,0.26) 28px, rgba(0,0,0,0) 29px);
  background-size: 316px 148.5px, 80px 148.5px;
  background-position: -120px 37px, 472px 37px;
  background-repeat: repeat, repeat-y;
}
```
